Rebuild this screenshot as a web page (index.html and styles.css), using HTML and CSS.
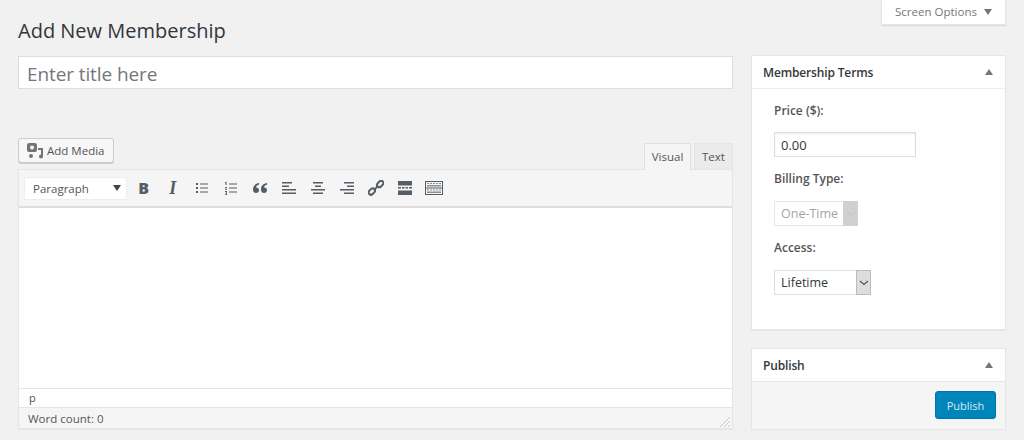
FILE: index.html
```html
<!DOCTYPE html>
<html lang="en">
<head>
  <meta charset="UTF-8">
  <title>Add New Membership</title>
  <link rel="stylesheet" href="styles.css">
</head>
<body>
  <div class="wrap">
    <div class="top">
      <h1>Add New Membership</h1>
      <div class="screen-tab">Screen Options <span class="arrow-down"></span></div>
    </div>

    <div class="columns">
      <div class="main">
        <div class="title-box">Enter title here</div>

        <div class="editor-head">
          <button class="media-btn">
            <svg width="18" height="17" viewBox="0 0 18 17"><path fill="#6f7479" fill-rule="evenodd" d="M3 1h6a2 2 0 0 1 2 2v5a2 2 0 0 1-2 2H3a2 2 0 0 1-2-2V3a2 2 0 0 1 2-2zm3 2.500a2 2 0 1 0 0 4 2 2 0 0 0 0-4z"/><circle cx="5" cy="14" r="2" fill="#6f7479"/><path fill="#6f7479" d="M12 6h5v8.500a2 2 0 1 1-2-2V8h-3z"/></svg>
            Add Media
          </button>
          <div class="tabs">
            <span class="tab active">Visual</span>
            <span class="tab">Text</span>
          </div>
        </div>

        <div class="editor">
          <div class="toolbar">
            <div class="format-select">Paragraph <span class="arrow-down dark"></span></div>
            <div class="tools">
              <span class="glyph bold">B</span>
              <span class="glyph italic">I</span>
              <svg width="14" height="14" viewBox="0 0 14 14"><path fill="#555d66" d="M1 2h2v2H1zM1 6h2v2H1zM1 10h2v2H1zM5 2.500h8v1H5zM5 6.500h8v1H5zM5 10.500h8v1H5z"/></svg>
              <svg width="14" height="14" viewBox="0 0 14 14"><path fill="#555d66" d="M1 1h1.500v3H1.500V2H1zM1 6h2v.8L1.800 8H3v.8H1v-.8l1.200-1.200H1zM1 10h2v4H1v-.8h1.200v-.8H1.400v-.7h.8v-.8H1zM5 2.500h8v1H5zM5 6.500h8v1H5zM5 10.500h8v1H5z"/></svg>
              <svg width="16" height="12" viewBox="0 0 16 12"><path fill="#555d66" d="M7 1C3.500 1.500 1 3.500 1 7.500 1 9.500 2 11 4 11s3-1.300 3-3-1.200-2.700-3-2.600C4.300 4 5.500 3 7 2.800zM15 1c-3.500.5-6 2.500-6 6.500 0 2 1 3.500 3 3.500s3-1.300 3-3-1.200-2.700-3-2.600c.3-1.400 1.500-2.400 3-2.600z"/></svg>
              <svg width="14" height="14" viewBox="0 0 14 14"><path fill="#555d66" d="M0 1h10v1.500H0zM0 4.500h7V6H0zM0 8h14v1.500H0zM0 11.500h14V13H0z"/></svg>
              <svg width="14" height="14" viewBox="0 0 14 14"><path fill="#555d66" d="M2 1h10v1.500H2zM4 4.500h6V6H4zM0 8h14v1.500H0zM2 11.500h10V13H2z"/></svg>
              <svg width="14" height="14" viewBox="0 0 14 14"><path fill="#555d66" d="M4 1h10v1.500H4zM7 4.500h7V6H7zM0 8h14v1.500H0zM4 11.500h10V13H4z"/></svg>
              <svg width="16" height="16" viewBox="0 0 16 16"><g fill="none" stroke="#555d66" stroke-width="2"><rect x="8" y="1" width="7" height="4.600" rx="2.300" transform="rotate(-45 11.500 3.300) translate(0 1)"/><rect x="1" y="10" width="7" height="4.600" rx="2.300" transform="rotate(-45 4.500 12.300) translate(0 -1)"/><path d="M5.800 10.200l4.400-4.400"/></g></svg>
              <svg width="14" height="14" viewBox="0 0 14 14"><path fill="#555d66" d="M0 0h14v4.500H0zM0 6h3v1.500H0zM4 6h2.500v1.500H4zM7.500 6H10v1.500H7.500zM11 6h3v1.500h-3zM0 9.500h14V14H0z"/></svg>
              <svg width="18" height="16" viewBox="0 0 18 16"><path fill="#555d66" d="M0 1h18v14H0zm1 1v5.500h16V2zm0 6.500V14h16V8.500z"/><path fill="#8b9095" d="M2 3h2v1H2zM5 3h2v1H5zM8 3h2v1H8zM11 3h2v1h-2zM14 3h2v1h-2zM2 5h14v1.500H2zM2 9.500h2v1H2zM5 9.500h2v1H5zM8 9.500h2v1H8zM11 9.500h2v1h-2zM14 9.500h2v1h-2zM2 11.500h14V13H2z"/></svg>
            </div>
          </div>
          <div class="edit-area"></div>
          <div class="path-bar">p</div>
          <div class="status-bar">
            Word count: 0
            <svg class="grip" width="12" height="12" viewBox="0 0 12 12"><path stroke="#c8ccd0" fill="none" d="M11 1L1 11M11 5L5 11M11 9l-2 2"/></svg>
          </div>
        </div>
      </div>

      <div class="side">
        <div class="box">
          <div class="box-head">Membership Terms <span class="arrow-up"></span></div>
          <div class="terms">
            <label>Price ($):</label>
            <div class="price-input">0.00</div>
            <label>Billing Type:</label>
            <div class="select disabled"><span>One-Time</span><span class="select-btn"><svg width="10" height="6" viewBox="0 0 10 6"><path d="M1 1l4 3.500L9 1" fill="none" stroke="#c6c6c6" stroke-width="1.200"/></svg></span></div>
            <label>Access:</label>
            <div class="select access"><span>Lifetime</span><span class="select-btn"><svg width="10" height="6" viewBox="0 0 10 6"><path d="M1 1l4 3.500L9 1" fill="none" stroke="#555" stroke-width="1.200"/></svg></span></div>
          </div>
        </div>

        <div class="box">
          <div class="box-head publish-head">Publish <span class="arrow-up"></span></div>
          <div class="publish-actions">
            <button class="publish-btn">Publish</button>
          </div>
        </div>
      </div>
    </div>
  </div>
</body>
</html>
```

FILE: styles.css
```css
* {
  box-sizing: border-box;
}

body {
  margin: 0;
  background: #f1f1f1;
  color: #444;
  font-family: "Open Sans", "Noto Sans", sans-serif;
  font-size: 12px;
  overflow: hidden;
}

.wrap {
  width: 1006px;
  margin-left: 18px;
}

.top {
  display: flex;
  justify-content: space-between;
  align-items: flex-start;
  height: 55px;
}

h1 {
  margin: 0;
  padding-top: 17px;
  font-size: 20px;
  line-height: 27px;
  font-weight: 400;
  color: #32373c;
}

.screen-tab {
  width: 125px;
  height: 25px;
  margin-right: 18px;
  background: #fff;
  box-shadow: 0 1px 1px rgba(0, 0, 0, 0.08);
  border: 1px solid #e5e5e5;
  border-top: 0;
  color: #72777c;
  font-size: 11.500px;
  line-height: 24px;
  text-align: center;
  white-space: nowrap;
}

.arrow-down {
  display: inline-block;
  margin-left: 4px;
  border-left: 4px solid transparent;
  border-right: 4px solid transparent;
  border-top: 6px solid #72777c;
  vertical-align: 1px;
}

.arrow-down.dark {
  border-top-color: #444;
}

.arrow-up {
  border-left: 4px solid transparent;
  border-right: 4px solid transparent;
  border-bottom: 6px solid #72777c;
}

.columns {
  display: flex;
  gap: 18px;
  align-items: flex-start;
}

.main {
  width: 715px;
}

.side {
  width: 255px;
  display: flex;
  flex-direction: column;
  gap: 18px;
}

.title-box {
  height: 33px;
  margin-top: 1px;
  padding-left: 8px;
  background: #fff;
  border: 1px solid #ddd;
  color: #72777c;
  font-size: 19px;
  line-height: 34px;
  letter-spacing: -0.1px;
}

.editor-head {
  display: flex;
  justify-content: space-between;
  align-items: flex-end;
  height: 80px;
}

.media-btn {
  display: flex;
  align-items: center;
  gap: 3px;
  width: 96px;
  height: 25px;
  margin-bottom: 6px;
  padding: 0 0 0 7px;
  background: #f7f7f7;
  border: 1px solid #ccc;
  border-radius: 3px;
  box-shadow: 0 1px 0 #ccc;
  color: #555;
  font: inherit;
  font-size: 11.500px;
  white-space: nowrap;
}

.tabs {
  display: flex;
  gap: 3px;
}

.tab {
  width: 39px;
  height: 26px;
  background: #ebebeb;
  border: 1px solid #e5e5e5;
  border-bottom: 0;
  color: #555;
  font-size: 11.500px;
  line-height: 26px;
  text-align: center;
}

.tab.active {
  width: 47px;
  height: 27px;
  margin-bottom: -1px;
  background: #f5f5f5;
  border-color: #e0e0e0;
  position: relative;
}

.editor {
  border: 1px solid #e5e5e5;
  box-shadow: 0 1px 1px rgba(0, 0, 0, 0.04);
}

.toolbar {
  display: flex;
  align-items: center;
  height: 38px;
  padding-left: 5px;
  background: #f5f5f5;
  border-bottom: 2px solid #dedede;
}

.format-select {
  display: flex;
  justify-content: space-between;
  align-items: center;
  width: 103px;
  height: 23px;
  padding: 0 5px 0 8px;
  background: #fff;
  border: 1px solid #eee;
  color: #555;
  font-size: 11.500px;
}

.tools {
  display: grid;
  grid-auto-flow: column;
  grid-auto-columns: 29.100px;
  justify-items: center;
  align-items: center;
  margin-left: 2px;
}

.glyph {
  color: #555d66;
  line-height: 18px;
}

.bold {
  font-size: 16px;
  font-weight: 800;
}

.italic {
  font-family: "Liberation Serif", serif;
  font-size: 18px;
  font-style: italic;
  font-weight: 700;
}

.edit-area {
  height: 180px;
  background: #fff;
}

.path-bar {
  height: 19px;
  padding-left: 10px;
  background: #fff;
  border-top: 1px solid #e5e5e5;
  color: #555;
  font-size: 11px;
  line-height: 17px;
}

.status-bar {
  display: flex;
  justify-content: space-between;
  align-items: center;
  height: 21px;
  padding: 0 1px 0 9px;
  background: #f5f5f5;
  border-top: 1px solid #e5e5e5;
  color: #555;
  font-size: 11.500px;
}

.grip {
  align-self: flex-end;
}

.box {
  background: #fff;
  border: 1px solid #e5e5e5;
  box-shadow: 0 1px 1px rgba(0, 0, 0, 0.04);
}

.box-head {
  display: flex;
  justify-content: space-between;
  align-items: center;
  height: 33px;
  padding: 0 12px 0 11px;
  border-bottom: 1px solid #eee;
  color: #32373c;
  font-size: 12px;
  font-weight: 600;
  letter-spacing: -0.15px;
}

.publish-head {
  border-bottom-color: #e5e5e5;
}

.terms {
  display: flex;
  flex-direction: column;
  align-items: flex-start;
  height: 240px;
  padding: 13px 0 0 22px;
  color: #444;
}

.terms label {
  height: 17px;
  line-height: 17px;
  font-size: 12px;
  font-weight: 600;
  color: #555;
}

.price-input {
  width: 142px;
  height: 25px;
  margin: 13px 0 13px;
  padding-left: 6px;
  border: 1px solid #ddd;
  box-shadow: inset 0 1px 2px rgba(0, 0, 0, 0.07);
  color: #32373c;
  font-size: 13px;
  line-height: 24px;
}

.select {
  display: flex;
  justify-content: space-between;
  height: 25px;
  margin: 14px 0 13px;
  padding-left: 6px;
  border: 1px solid #ddd;
  color: #32373c;
  font-size: 12.500px;
  line-height: 23px;
}

.select.disabled {
  width: 84px;
  color: #a0a5aa;
  border-color: #e5e5e5;
}

.select.access {
  width: 97px;
  margin-top: 14px;
}

.select-btn {
  display: flex;
  align-items: center;
  justify-content: center;
  width: 15px;
  background: #ddd;
  border: 1px solid #bbb;
  margin: -1px -1px -1px 0;
}

.disabled .select-btn {
  background: #d0d0d0;
  border-color: #d0d0d0;
}

.publish-actions {
  display: flex;
  justify-content: flex-end;
  height: 47px;
  padding: 9px 9px 0 0;
  background: #f5f5f5;
}

.publish-btn {
  width: 61px;
  height: 28px;
  background: #0085ba;
  border: 1px solid #0073aa;
  border-radius: 3px;
  color: #d8eaf3;
  font: inherit;
  font-size: 11px;
}
```
